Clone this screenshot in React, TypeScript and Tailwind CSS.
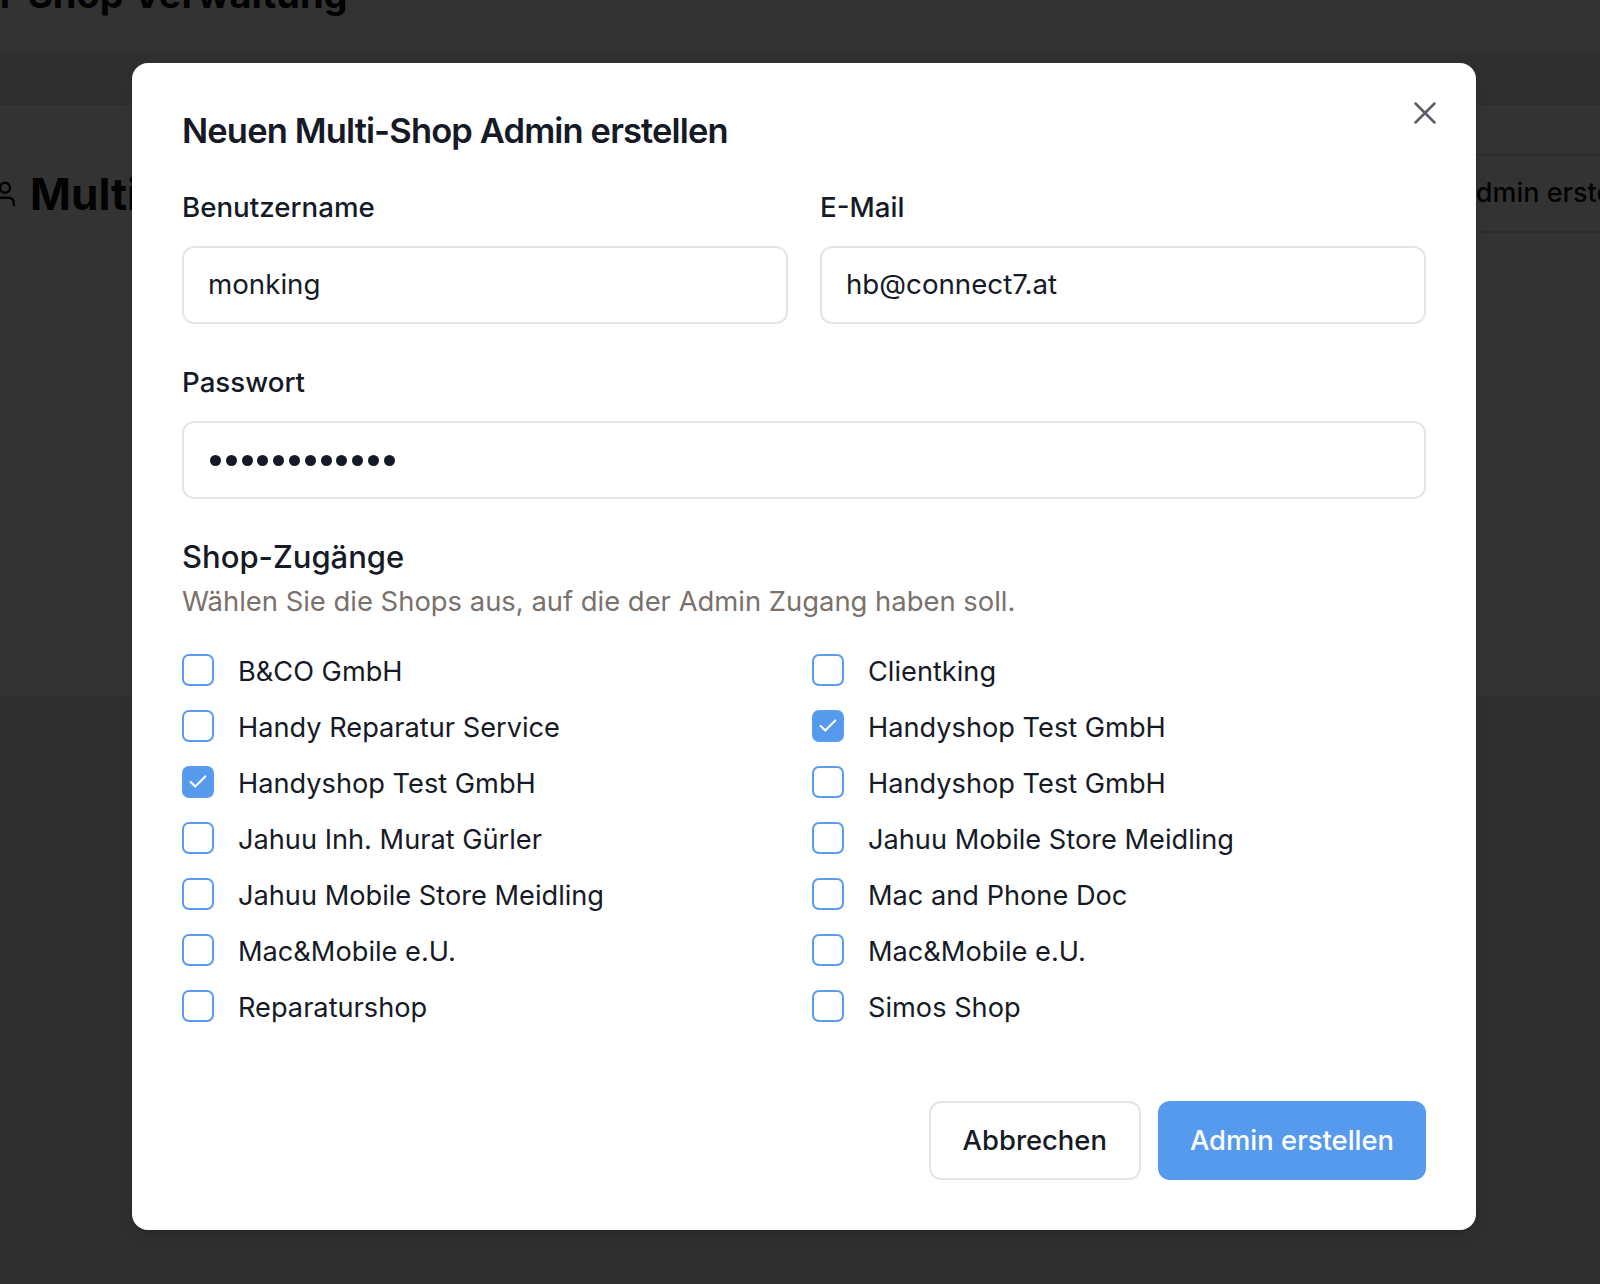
import React from 'react';
import { X, Check, User, Plus } from 'lucide-react';

const shops = [
  { name: 'B&CO GmbH', checked: false },
  { name: 'Clientking', checked: false },
  { name: 'Handy Reparatur Service', checked: false },
  { name: 'Handyshop Test GmbH', checked: true },
  { name: 'Handyshop Test GmbH', checked: true },
  { name: 'Handyshop Test GmbH', checked: false },
  { name: 'Jahuu Inh. Murat Gürler', checked: false },
  { name: 'Jahuu Mobile Store Meidling', checked: false },
  { name: 'Jahuu Mobile Store Meidling', checked: false },
  { name: 'Mac and Phone Doc', checked: false },
  { name: 'Mac&Mobile e.U.', checked: false },
  { name: 'Mac&Mobile e.U.', checked: false },
  { name: 'Reparaturshop', checked: false },
  { name: 'Simos Shop', checked: false },
];

function ShopCheckbox({ name, checked }: { name: string; checked: boolean }) {
  return (
    <label className="flex items-start gap-[24px]">
      <span
        className={`mt-[2px] flex h-[32px] w-[32px] shrink-0 items-center justify-center rounded-[7px] border-2 border-[#5a9cf0] ${
          checked ? 'bg-[#559aec]' : 'bg-white'
        }`}
      >
        {checked && <Check size={22} strokeWidth={2.4} className="text-white" />}
      </span>
      <span className="text-[27.2px] leading-[40px] text-[#151a26]">{name}</span>
    </label>
  );
}

function Field({ label, value }: { label: string; value: string }) {
  return (
    <div className="flex flex-col gap-[19px]">
      <span className="text-[27.7px] font-medium leading-[40px] text-[#151a26]">{label}</span>
      <div className="flex h-[78px] items-center rounded-[12px] border-2 border-[#e5e5e5] bg-white px-[24px] text-[27.7px] text-[#151a26]">
        {value}
      </div>
    </div>
  );
}

export default function App() {
  return (
    <div className="relative h-[1284px] w-full overflow-hidden bg-white font-['Inter',sans-serif]">
      {/* page behind the dialog */}
      <div className="h-[54px] overflow-hidden border-b border-[#e2e2e2]">
        <div className="-ml-[84px] -mt-[25px] whitespace-nowrap text-[38px] font-bold leading-[38px] text-[#0a0a0a]">
          Multi-Shop Verwaltung
        </div>
      </div>
      <div className="h-[51px] border-b border-[#e2e2e2] bg-[#ececec]" />
      <div className="h-[592px] border-b border-[#e2e2e2] pt-[49px]">
        <div className="flex items-center justify-between">
          <div className="-ml-[10px] flex items-center gap-[10px] text-[#0a0a0a]">
            <User size={30} strokeWidth={2} />
            <span className="whitespace-nowrap text-[44px] font-bold">Multi-Shop Admins</span>
          </div>
          <div className="-mr-[80px] flex h-[79px] w-[279px] items-center gap-[14px] rounded-[12px] border-2 border-[#e2e2e2] px-[20px] text-[27px] font-medium text-[#0a0a0a]">
            <Plus size={28} />
            <span className="whitespace-nowrap">Admin erstellen</span>
          </div>
        </div>
      </div>
      <div className="h-full bg-[#ececec]" />

      {/* overlay */}
      <div className="absolute inset-0 bg-black/80" />

      {/* dialog */}
      <div className="absolute left-[132px] top-[63px] h-[1167px] w-[1344px] rounded-[16px] bg-white px-[50px] pt-[50px] shadow-lg">
        <button className="absolute right-[32px] top-[31px] text-[#5b5d66]">
          <X size={38} strokeWidth={1.6} />
        </button>

        <h2 className="text-[34.5px] font-semibold leading-[36px] tracking-tight text-[#151a26]">
          Neuen Multi-Shop Admin erstellen
        </h2>

        <div className="mt-[38px] grid grid-cols-2 gap-x-[32px]">
          <Field label="Benutzername" value="monking" />
          <Field label="E-Mail" value="hb@connect7.at" />
        </div>

        <div className="mt-[38px] flex flex-col gap-[19px]">
          <span className="text-[27.7px] font-medium leading-[40px] text-[#151a26]">Passwort</span>
          <div className="flex h-[78px] items-center gap-[4.8px] rounded-[12px] border-2 border-[#e5e5e5] bg-white px-[26px]">
            {Array.from({ length: 12 }).map((_, i) => (
              <span key={i} className="h-[11px] w-[11px] rounded-full bg-[#151a26]" />
            ))}
          </div>
        </div>

        <div className="mt-[34px]">
          <h3 className="text-[31px] font-medium leading-[48px] text-[#151a26]">Shop-Zugänge</h3>
          <p className="text-[27.4px] leading-[40px] text-[#78716c]">
            Wählen Sie die Shops aus, auf die der Admin Zugang haben soll.
          </p>
        </div>

        <div className="mt-[31px] grid grid-cols-2 gap-x-[16px] gap-y-[16px]">
          {shops.map((s, i) => (
            <ShopCheckbox key={i} name={s.name} checked={s.checked} />
          ))}
        </div>

        <div className="mt-[73px] flex justify-end gap-[17px]">
          <button className="h-[79px] rounded-[12px] border-2 border-[#e5e5e5] bg-white px-[32px] text-[27.4px] font-medium text-[#151a26]">
            Abbrechen
          </button>
          <button className="h-[79px] rounded-[12px] bg-[#559aec] px-[32px] text-[27.4px] font-medium text-white">
            Admin erstellen
          </button>
        </div>
      </div>
    </div>
  );
}
